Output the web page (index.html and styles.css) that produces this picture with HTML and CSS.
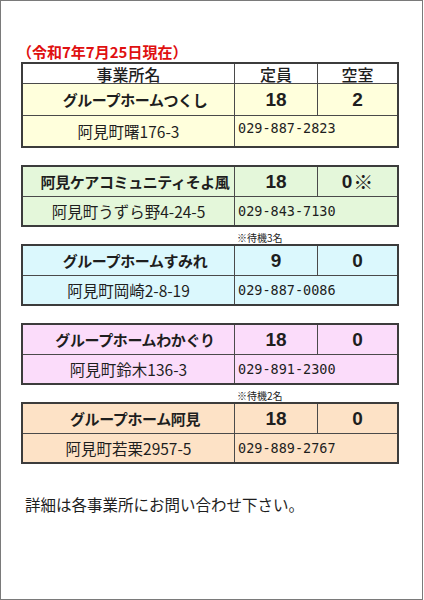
FILE: index.html
```html
<!DOCTYPE html>
<html lang="ja">
<head>
<meta charset="utf-8">
<title>空室状況</title>
<link rel="stylesheet" href="styles.css">
</head>
<body>
<div class="page">
  <div class="title">（令和7年7月25日現在）</div>

  <div class="block block-first yellow">
    <div class="head">事業所名</div>
    <div class="head">定員</div>
    <div class="head">空室</div>
    <div class="name">グループホームつくし</div>
    <div class="num">18</div>
    <div class="num">2</div>
    <div class="addr">阿見町曙176-3</div>
    <div class="tel tel-top">029-887-2823</div>
  </div>
  <div class="spacer"></div>

  <div class="block green">
    <div class="name">阿見ケアコミュニティそよ風</div>
    <div class="num">18</div>
    <div class="num">0<span class="kome">※</span></div>
    <div class="addr">阿見町うずら野4-24-5</div>
    <div class="tel">029-843-7130</div>
  </div>
  <div class="spacer"><span class="note">※待機3名</span></div>

  <div class="block blue">
    <div class="name">グループホームすみれ</div>
    <div class="num">9</div>
    <div class="num">0</div>
    <div class="addr">阿見町岡崎2-8-19</div>
    <div class="tel">029-887-0086</div>
  </div>
  <div class="spacer"></div>

  <div class="block pink">
    <div class="name">グループホームわかぐり</div>
    <div class="num">18</div>
    <div class="num">0</div>
    <div class="addr">阿見町鈴木136-3</div>
    <div class="tel">029-891-2300</div>
  </div>
  <div class="spacer"><span class="note">※待機2名</span></div>

  <div class="block orange">
    <div class="name">グループホーム阿見</div>
    <div class="num">18</div>
    <div class="num">0</div>
    <div class="addr">阿見町若栗2957-5</div>
    <div class="tel">029-889-2767</div>
  </div>

  <p class="footer">詳細は各事業所にお問い合わせ下さい。</p>
</div>
</body>
</html>
```

FILE: styles.css
```css
html, body {
  margin: 0;
  padding: 0;
  background: #ffffff;
}

.page {
  width: 423px;
  height: 600px;
  box-sizing: border-box;
  border: 1px solid #7a7a7a;
  padding: 41px 0 0 20px;
  font-family: "Noto Sans CJK JP", "Noto Sans", sans-serif;
  color: #1e1e1e;
  display: flex;
  flex-direction: column;
}

.title {
  height: 20px;
  line-height: 20px;
  font-size: 15px;
  font-weight: 700;
  color: #e01010;
  text-indent: -4px;
}

.block {
  width: 378px;
  box-sizing: border-box;
  border: 2px solid #3c3c3c;
  background: #4a4a4a;
  display: grid;
  grid-template-columns: 211px 82px 1fr;
  grid-template-rows: 29px 28px;
  gap: 1px;
}

.block-first {
  grid-template-rows: 19px 31px 30px;
}

.block > div {
  display: flex;
  align-items: center;
  justify-content: center;
  background: var(--row);
}

.yellow { --row: #ffffdc; }
.green  { --row: #e4f7da; }
.blue   { --row: #dbf8fd; }
.pink   { --row: #fbdcfa; }
.orange { --row: #fde2c6; }

.block > .head {
  background: #ffffff;
  font-size: 16px;
  font-weight: 500;
  line-height: 1;
}

.block > .name {
  font-size: 15px;
  font-weight: 700;
  padding-left: 13px;
  letter-spacing: -0.4px;
  white-space: nowrap;
}

.block > .num {
  font-family: "Liberation Sans", Arial, sans-serif;
  font-size: 19px;
  font-weight: 700;
}

.kome {
  font-family: "Noto Sans CJK JP", sans-serif;
  font-size: 20px;
  font-weight: 700;
  margin-left: 1px;
}

.block > .addr {
  font-size: 15.5px;
  font-weight: 400;
}

.block > .tel {
  grid-column: 2 / 4;
  justify-content: flex-start;
  padding-left: 3px;
  font-family: "DejaVu Sans Mono", "Liberation Mono", monospace;
  font-size: 13.5px;
}

.block > .tel-top {
  align-items: flex-start;
  padding-top: 4px;
}

.spacer {
  height: 17px;
  line-height: 17px;
  padding-left: 216px;
}

.note {
  font-size: 10px;
  color: #222;
}

.footer {
  margin: 30px 0 0 4px;
  font-size: 15.5px;
  line-height: 20px;
  color: #1e1e1e;
}
```
